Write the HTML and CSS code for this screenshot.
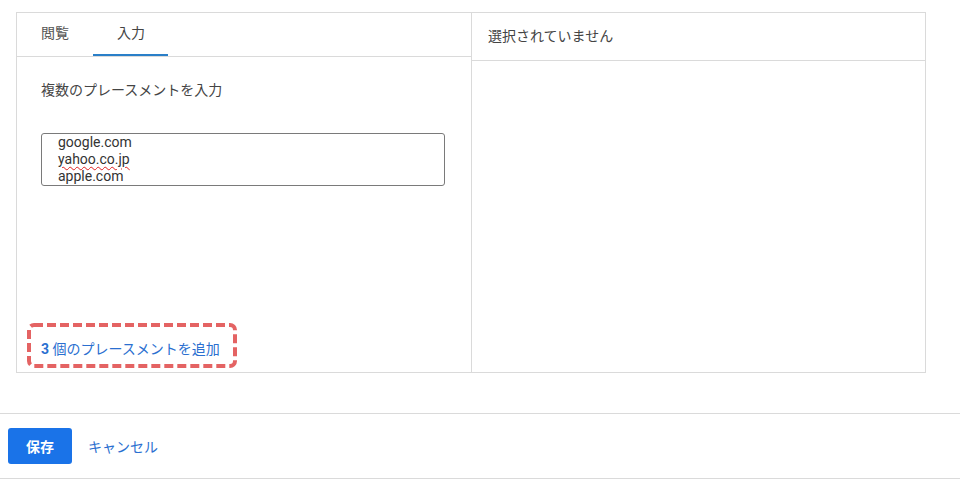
FILE: index.html
```html
<!DOCTYPE html>
<html lang="ja">
<head>
<meta charset="utf-8">
<link rel="stylesheet" href="styles.css">
</head>
<body>
<div class="page">
  <div class="panel">
    <div class="left">
      <div class="tabs">
        <div class="tab">閲覧</div>
        <div class="tab active">入力</div>
      </div>
      <div class="left-body">
        <div class="label">複数のプレースメントを入力</div>
        <div class="textarea">
          <div>google.com</div>
          <div><span class="spell">yahoo.co.jp</span></div>
          <div>apple.com</div>
        </div>
        <div class="add-wrap">
          <a class="add-link"><b>3</b> 個のプレースメントを追加</a>
          <svg class="annot" width="210" height="45" viewBox="0 0 210 45">
            <rect x="2" y="2" width="206" height="41" rx="5" ry="5" fill="none" stroke="#e46363" stroke-width="4" stroke-dasharray="9 4"/>
          </svg>
        </div>
      </div>
    </div>
    <div class="right">
      <div class="right-head">選択されていません</div>
    </div>
  </div>
  <div class="footer">
    <button class="save">保存</button>
    <a class="cancel">キャンセル</a>
  </div>
</div>
</body>
</html>
```

FILE: styles.css
```css
* { box-sizing: border-box; }
html, body { margin: 0; padding: 0; background: #fff; }
body {
  font-family: Roboto, "Noto Sans CJK JP", sans-serif;
  font-size: 14px;
  color: #444;
}
.page { width: 960px; height: 479px; padding-top: 12px; }
.panel {
  margin-left: 16px;
  width: 910px;
  height: 361px;
  border: 1px solid #dadada;
  display: flex;
}
.left {
  width: 455px;
  border-right: 1px solid #dadada;
  display: flex;
  flex-direction: column;
}
.tabs {
  height: 44px;
  border-bottom: 1px solid #dadada;
  display: flex;
}
.tab {
  height: 43px;
  padding: 1px 0 0 24px;
  line-height: 38px;
  color: #555;
  white-space: nowrap;
  border-bottom: 2px solid transparent;
}
.tabs .tab:first-child { width: 76px; }
.tab.active { border-bottom-color: #2a7fc8; width: 75px; color: #444; }
.left-body {
  flex: 1;
  padding: 23px 26px 13px 24px;
  display: flex;
  flex-direction: column;
}
.label { line-height: 20px; color: #444; }
.textarea {
  margin-top: 33px;
  width: 404px;
  height: 53px;
  border: 1px solid #7a7a7a;
  border-radius: 3px;
  padding: 0 0 0 16px;
  font-family: Roboto, sans-serif;
  font-size: 14px;
  line-height: 17px;
  color: #333;
}
.spell { text-decoration: underline wavy #e02020; text-decoration-thickness: 1px; text-underline-offset: 2px; }
.add-wrap { margin-top: auto; position: relative; height: 20px; }
.add-link {
  color: #2a6fd0;
  line-height: 20px;
  display: block;
}
.add-link b { font-weight: 700; }
.annot {
  position: absolute;
  left: -14px;
  top: -16px;
}
.right { flex: 1; }
.right-head {
  height: 48px;
  border-bottom: 1px solid #dadada;
  padding-left: 16px;
  line-height: 46px;
  color: #444;
}
.footer {
  margin-top: 40px;
  border-top: 1px solid #dadada;
  border-bottom: 1px solid #dadada;
  height: 66px;
  padding: 14px 8px 0;
  display: flex;
  align-items: flex-start;
  gap: 16px;
}
.save {
  width: 64px;
  height: 36px;
  border: none;
  border-radius: 3px;
  background: #1a73e8;
  color: #fff;
  font-family: Roboto, "Noto Sans CJK JP", sans-serif;
  font-size: 14px;
  font-weight: 700;
}
.cancel { color: #2a6fd0; line-height: 38px; font-size: 14px; }
```
